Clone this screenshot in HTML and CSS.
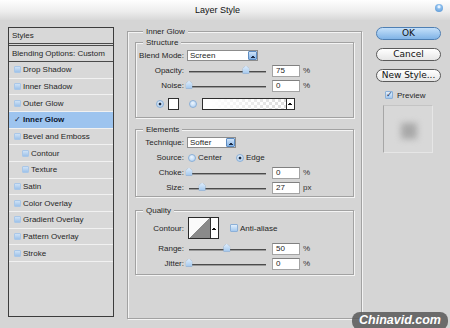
FILE: index.html
```html
<!DOCTYPE html>
<html lang="en">
<head>
    <meta charset="UTF-8">
    <title>Layer Style</title>
    <link rel="stylesheet" href="styles.css">
</head>
<body>

<div class="titlebar">
    <span class="title">Layer Style</span>
    <span class="close"></span>
</div>

<div class="dialog">
    <div class="styles-list">
        <div class="list-head">Styles</div>
        <div class="list-blend">Blending Options: Custom</div>
        <div class="item"><span class="cb"></span>Drop Shadow</div>
        <div class="item"><span class="cb"></span>Inner Shadow</div>
        <div class="item"><span class="cb"></span>Outer Glow</div>
        <div class="item active"><span class="tick">✓</span>Inner Glow</div>
        <div class="item"><span class="cb"></span>Bevel and Emboss</div>
        <div class="item sub"><span class="cb"></span>Contour</div>
        <div class="item sub"><span class="cb"></span>Texture</div>
        <div class="item"><span class="cb"></span>Satin</div>
        <div class="item"><span class="cb"></span>Color Overlay</div>
        <div class="item"><span class="cb"></span>Gradient Overlay</div>
        <div class="item"><span class="cb"></span>Pattern Overlay</div>
        <div class="item"><span class="cb"></span>Stroke</div>
    </div>

    <div class="group outer">
        <div class="group-title">Inner Glow</div>

        <div class="group structure">
            <div class="group-title">Structure</div>
            <div class="row">
                <span class="lbl">Blend Mode:</span>
                <div class="select wide"><span class="select-text">Screen</span><span class="drop"></span></div>
            </div>
            <div class="row">
                <span class="lbl">Opacity:</span>
                <div class="slider"><span class="thumb" style="left: 74%"></span></div>
                <span class="num">75</span><span class="unit">%</span>
            </div>
            <div class="row">
                <span class="lbl">Noise:</span>
                <div class="slider"><span class="thumb" style="left: 0%"></span></div>
                <span class="num">0</span><span class="unit">%</span>
            </div>
            <div class="row color-row">
                <span class="radio on"></span>
                <span class="swatch"></span>
                <span class="radio gap"></span>
                <div class="gradient"><span class="gradient-fill"></span><span class="mini-drop"></span></div>
            </div>
        </div>

        <div class="group elements">
            <div class="group-title">Elements</div>
            <div class="row">
                <span class="lbl">Technique:</span>
                <div class="select"><span class="select-text">Softer</span><span class="drop"></span></div>
            </div>
            <div class="row">
                <span class="lbl">Source:</span>
                <span class="radio first"></span><span class="opt">Center</span>
                <span class="radio on edge"></span><span class="opt">Edge</span>
            </div>
            <div class="row">
                <span class="lbl">Choke:</span>
                <div class="slider"><span class="thumb" style="left: 0%"></span></div>
                <span class="num">0</span><span class="unit">%</span>
            </div>
            <div class="row">
                <span class="lbl">Size:</span>
                <div class="slider"><span class="thumb" style="left: 17%"></span></div>
                <span class="num">27</span><span class="unit">px</span>
            </div>
        </div>

        <div class="group quality">
            <div class="group-title">Quality</div>
            <div class="row contour-row">
                <span class="lbl">Contour:</span>
                <div class="contour"><span class="curve"></span><span class="mini-drop"></span></div>
                <span class="check"></span><span class="opt">Anti-aliase</span>
            </div>
            <div class="row">
                <span class="lbl">Range:</span>
                <div class="slider"><span class="thumb" style="left: 49%"></span></div>
                <span class="num">50</span><span class="unit">%</span>
            </div>
            <div class="row">
                <span class="lbl">Jitter:</span>
                <div class="slider"><span class="thumb" style="left: 0%"></span></div>
                <span class="num">0</span><span class="unit">%</span>
            </div>
        </div>
    </div>

    <div class="side">
        <button class="btn ok">OK</button>
        <button class="btn">Cancel</button>
        <button class="btn">New Style...</button>
        <label class="preview-check"><span class="check on">✓</span>Preview</label>
        <div class="preview"><span class="preview-blob"></span></div>
    </div>
</div>

<div class="watermark">Chinavid.com</div>

</body>
</html>
```

FILE: styles.css
```css
body {
    margin: 0;
    width: 450px;
    height: 328px;
    overflow: hidden;
    position: relative;
    background-color: #d5d5d5;
    font-family: "Liberation Sans", Arial, sans-serif;
    font-size: 8px;
    color: #262626;
}
.titlebar {
    height: 20px;
    display: flex;
    align-items: center;
    background: linear-gradient(#fefefe, #eeeeee 55%, #d8d8d8);
}
.title {
    flex: 1;
    text-align: center;
    font-size: 9px;
    color: #111;
}
.close {
    width: 8px;
    height: 8px;
    margin: 0 7px 4px 0;
    border-radius: 50%;
    background: radial-gradient(circle at 50% 35%, #e8f3ff 0 1px, #8fc0ee 2px, #4f8fd0);
}
.dialog {
    display: flex;
    padding: 7px 0 0 8px;
}

/* left list */
.styles-list {
    width: 106px;
    height: 290px;
    box-sizing: border-box;
    border: 1px solid #3c3c3c;
    background-color: #d8d8d8;
}
.list-head,
.list-blend {
    height: 15px;
    line-height: 15px;
    padding-left: 3px;
}
.list-head {
    border-bottom: 3px double #4a4a4a;
}
.list-blend {
    border-bottom: 1px solid #4a4a4a;
}
.item {
    height: 15.67px;
    display: flex;
    align-items: center;
    padding-left: 5px;
    border-bottom: 1px solid #f1f1f1;
}
.item.sub {
    padding-left: 13px;
}
.item.active {
    background-color: #9dc4ef;
    font-weight: bold;
    color: #0b1730;
}
.cb {
    width: 5px;
    height: 5px;
    margin-right: 2px;
    border: 1px solid #a9c7e8;
    border-radius: 1px;
    background: linear-gradient(#cfe2f6, #9ec2e9);
}
.tick {
    width: 7px;
    margin-right: 2px;
    font-family: "DejaVu Sans", sans-serif;
    font-size: 8px;
    color: #16243c;
}

/* group boxes */
.group {
    box-sizing: border-box;
    border: 1px solid #a2a2a2;
    box-shadow: inset 1px 1px 0 #f4f4f4, 1px 1px 0 #f4f4f4;
}
.group-title {
    width: fit-content;
    height: 10px;
    line-height: 10px;
    margin: -5px 0 0 8px;
    padding: 0 3px;
    background-color: #d5d5d5;
}
.group .group .group-title {
    margin-left: 7px;
}
.outer {
    width: 235px;
    height: 288px;
    margin: 4px 0 0 13px;
    padding: 0 7px;
}
.structure {
    margin-top: 5px;
    padding-bottom: 6px;
}
.elements {
    margin-top: 11px;
    padding-bottom: 1px;
}
.quality {
    margin-top: 13px;
    padding-bottom: 3px;
}
.row {
    display: flex;
    align-items: center;
    height: 15px;
}
.lbl {
    flex: none;
    width: 48px;
    margin-right: 3px;
    text-align: right;
}

/* controls */
.select {
    width: 49px;
    height: 11px;
    box-sizing: border-box;
    display: flex;
    align-items: center;
    border: 1px solid #8c8c8c;
    background-color: #fff;
}
.select.wide {
    width: 71px;
}
.select-text {
    flex: 1;
    padding-left: 2px;
    line-height: 9px;
}
.drop {
    width: 9px;
    height: 9px;
    box-sizing: border-box;
    border: 1px solid #5d8cc2;
    border-radius: 1px;
    background:
        linear-gradient(135deg, transparent 50%, #1b2a44 50%) 2px 3px / 2px 3px no-repeat,
        linear-gradient(225deg, transparent 50%, #1b2a44 50%) 4px 3px / 2px 3px no-repeat,
        linear-gradient(#cfe3f8, #86b4e6);
}
.slider {
    position: relative;
    width: 77px;
    height: 10px;
    margin-left: 2px;
}
.slider::before {
    content: "";
    position: absolute;
    left: 0;
    right: 0;
    top: 5px;
    height: 1px;
    background-color: #4b4b4b;
    box-shadow: 0 1px 0 #9a9a9a;
}
.thumb {
    position: absolute;
    top: 0;
    width: 7px;
    height: 8px;
    transform: translateX(-50%);
    filter: drop-shadow(0 0 0.5px #5f86b3);
}
.thumb::before {
    content: "";
    display: block;
    width: 100%;
    height: 100%;
    background: linear-gradient(#e0eefc, #9fc5ec);
    clip-path: polygon(50% 0, 100% 40%, 100% 100%, 0 100%, 0 40%);
}
.num {
    width: 28px;
    height: 12px;
    box-sizing: border-box;
    margin-left: 6px;
    padding-left: 3px;
    line-height: 10px;
    border: 1px solid #a4a4a4;
    border-top-color: #808080;
    background-color: #fff;
}
.unit {
    margin-left: 3px;
    color: #333;
}
.radio {
    flex: none;
    width: 8px;
    height: 8px;
    box-sizing: border-box;
    border: 1px solid #8cb0d8;
    border-radius: 50%;
    background: radial-gradient(circle at 45% 35%, #eef6fe, #a6caef);
}
.radio.on {
    background:
        radial-gradient(circle, #1d2b40 0 1.2px, transparent 1.7px),
        radial-gradient(circle at 45% 35%, #eef6fe, #a6caef);
}
.color-row {
    margin-top: 3px;
    padding-left: 20px;
}
.swatch {
    width: 11px;
    height: 12px;
    box-sizing: border-box;
    margin-left: 4px;
    border: 1px solid #2e2e2e;
    background-color: #fff;
}
.radio.gap {
    margin-left: 10px;
}
.gradient {
    display: flex;
    width: 93px;
    height: 12px;
    margin-left: 5px;
    box-sizing: border-box;
    border: 1px solid #2e2e2e;
    background-color: #fff;
}
.gradient-fill {
    flex: 1;
    background:
        linear-gradient(to right, #fff 10%, rgba(255, 255, 255, 0.2)),
        repeating-conic-gradient(#d4d4d4 0 25%, #fff 0 50%) 0 0 / 6px 6px;
}
.mini-drop {
    width: 7px;
    border-left: 1px solid #2e2e2e;
    background:
        linear-gradient(135deg, transparent 50%, #111 50%) 1px 50% / 2px 3px no-repeat,
        linear-gradient(225deg, transparent 50%, #111 50%) 3px 50% / 2px 3px no-repeat,
        #fff;
}
.radio.first {
    margin-left: 1px;
}
.opt {
    margin-left: 2px;
}
.radio.edge {
    margin-left: 14px;
}
.contour-row {
    height: 24px;
    margin-bottom: 1px;
}
.contour {
    display: flex;
    width: 31px;
    height: 22px;
    margin-left: 1px;
    box-sizing: border-box;
    border: 1px solid #2a2a2a;
    background-color: #fff;
}
.curve {
    flex: 1;
    background: linear-gradient(to top left, #8a8a8a 50%, #fbfbfb 50%);
}
.check {
    width: 8px;
    height: 8px;
    box-sizing: border-box;
    margin-left: 11px;
    border: 1px solid #8cb0d8;
    border-radius: 1px;
    background: linear-gradient(#e2effc, #a4c8ee);
}

/* right column */
.side {
    width: 65px;
    margin-left: 14px;
    display: flex;
    flex-direction: column;
}
.btn {
    height: 13px;
    margin: 0 0 8px;
    padding: 0;
    border: 1px solid #5a5a5a;
    border-radius: 7px;
    background: linear-gradient(#ffffff, #e6e6e6);
    font-family: "DejaVu Sans", sans-serif;
    font-size: 9px;
    line-height: 11px;
    color: #111;
}
.btn.ok {
    border-color: #4e7fb3;
    background: linear-gradient(#c4e0fa, #80b3e6);
}
.preview-check {
    display: flex;
    align-items: center;
    height: 10px;
    margin: 0 0 5px 9px;
    font-size: 8px;
}
.preview-check .check {
    margin: 0 4px 0 0;
    font-family: "DejaVu Sans", sans-serif;
    font-size: 8px;
    line-height: 6px;
    color: #13325e;
    overflow: hidden;
}
.preview {
    width: 50px;
    height: 48px;
    margin-left: 7px;
    box-sizing: border-box;
    display: flex;
    align-items: center;
    justify-content: center;
    border: 1px solid #e6e6e6;
    border-left-color: #a6a6a6;
    border-top-color: #c4c4c4;
    background-color: #d8d8d8;
}
.preview-blob {
    width: 16px;
    height: 16px;
    margin: 4px 0 0 2px;
    background-color: #a9a9a9;
    filter: blur(3px);
}
.watermark {
    position: absolute;
    right: 2px;
    bottom: -2px;
    height: 18px;
    padding: 0 7px;
    border-radius: 8px;
    background-color: rgba(88, 88, 88, 0.85);
    color: #fff;
    font-family: "Liberation Sans", Arial, sans-serif;
    font-size: 12.5px;
    font-weight: bold;
    font-style: italic;
    line-height: 17px;
}
```
